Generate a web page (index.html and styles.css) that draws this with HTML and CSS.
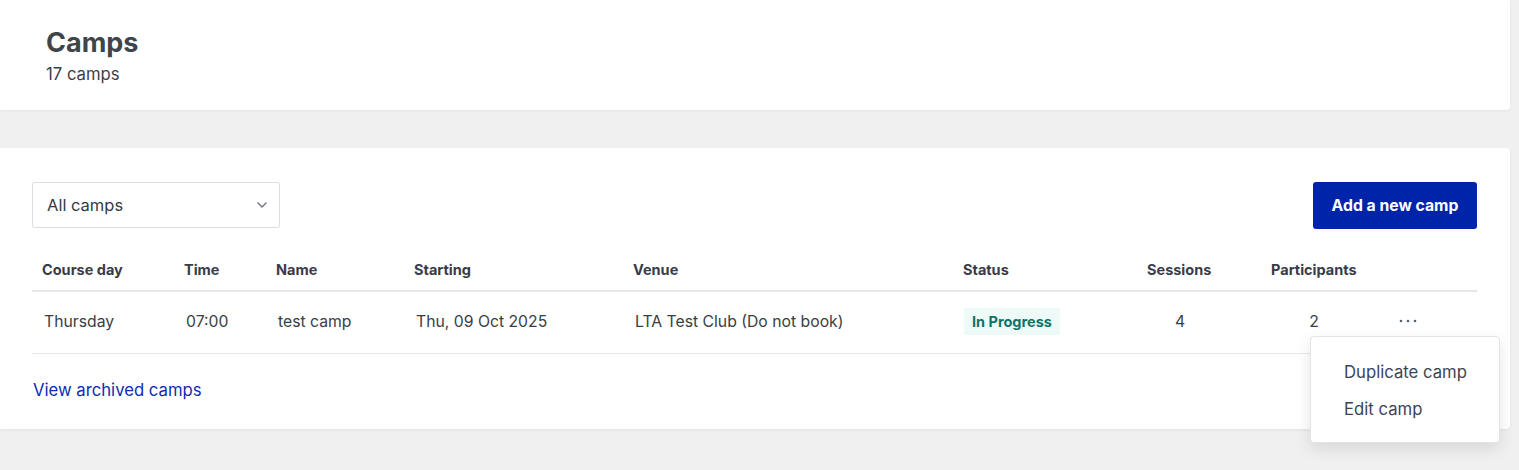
FILE: index.html
```html
<!DOCTYPE html>
<html>
<head>
<meta charset="utf-8">
<link rel="stylesheet" href="styles.css">
</head>
<body>
<div class="page">
  <section class="card header-card">
    <h1 class="title">Camps</h1>
    <div class="subtitle">17 camps</div>
  </section>
  <section class="card list-card">
    <div class="toolbar">
      <div class="select">
        <span>All camps</span>
        <svg class="chev" width="10" height="6" viewBox="0 0 10 6"><path d="M1 1l4 4 4-4" fill="none" stroke="#6b7280" stroke-width="1.4" stroke-linecap="round" stroke-linejoin="round"/></svg>
      </div>
      <button class="btn-primary">Add a new camp</button>
    </div>
    <table class="camps">
      <thead>
        <tr>
          <th class="c-day">Course day</th>
          <th class="c-time">Time</th>
          <th class="c-name">Name</th>
          <th class="c-start">Starting</th>
          <th class="c-venue">Venue</th>
          <th class="c-status">Status</th>
          <th class="c-sess">Sessions</th>
          <th class="c-part">Participants</th>
          <th class="c-act"></th>
        </tr>
      </thead>
      <tbody>
        <tr>
          <td>Thursday</td>
          <td>07:00</td>
          <td>test camp</td>
          <td>Thu, 09 Oct 2025</td>
          <td>LTA Test Club (Do not book)</td>
          <td class="status-cell"><span class="badge">In Progress</span></td>
          <td class="num sess">4</td>
          <td class="num part">2</td>
          <td class="act">
            <div class="menu-wrap">
              <svg width="18" height="4" viewBox="0 0 18 4"><circle cx="2" cy="2" r="1.3" fill="#5b6270"/><circle cx="9" cy="2" r="1.3" fill="#5b6270"/><circle cx="16" cy="2" r="1.3" fill="#5b6270"/></svg>
              <div class="menu">
                <div class="menu-item">Duplicate camp</div>
                <div class="menu-item">Edit camp</div>
              </div>
            </div>
          </td>
        </tr>
      </tbody>
    </table>
    <a class="archived" href="#">View archived camps</a>
  </section>
</div>
</body>
</html>
```

FILE: styles.css
```css
* { box-sizing: border-box; }
html, body { margin: 0; padding: 0; }
body {
  background: #f0f0f0;
  font-family: Inter, "Noto Sans", sans-serif;
  color: #333740;
  width: 1519px;
  height: 470px;
  overflow: hidden;
}
.page {
  width: 1510px;
  display: flex;
  flex-direction: column;
  gap: 38px;
}
.card {
  background: #fff;
  border-radius: 0 0 4px 0;
  box-shadow: 0 1px 3px rgba(0,0,0,0.06);
}
.header-card {
  height: 110px;
  padding: 28px 46px 0;
}
.title {
  margin: 0;
  font-size: 27px;
  font-weight: 700;
  line-height: 30px;
  color: #3f454b;
}
.subtitle {
  margin-top: 5px;
  font-size: 16.7px;
  line-height: 22px;
  color: #3a3f48;
}
.list-card {
  height: 281px;
  border-radius: 0 4px 4px 0;
  padding: 34px 33px 0 32px;
}
.toolbar {
  display: flex;
  justify-content: space-between;
  align-items: flex-start;
}
.select {
  width: 248px;
  height: 46px;
  border: 1px solid #dcdcdc;
  border-radius: 3px;
  display: flex;
  align-items: center;
  justify-content: space-between;
  padding: 0 12px 0 14px;
  font-size: 16.5px;
  color: #333a44;
}
.btn-primary {
  width: 164px;
  height: 47px;
  border: 0;
  border-radius: 3px;
  background: #0024a9;
  color: #fff;
  font-family: Inter, sans-serif;
  font-weight: 700;
  font-size: 15.75px;
}
.camps {
  width: 100%;
  border-collapse: collapse;
  margin-top: 20px;
}
.camps th {
  text-align: left;
  font-size: 14.5px;
  font-weight: 700;
  color: #383b48;
  height: 42px;
  padding: 0 0 0 10px;
  border-bottom: 2px solid #e6e6ec;
  white-space: nowrap;
}
.camps td {
  height: 62px;
  font-size: 15.75px;
  color: #3a3d42;
  padding: 0 0 1px 12px;
  border-bottom: 1px solid #e8e8ec;
  white-space: nowrap;
}
.c-day { width: 142px; }
.c-time { width: 92px; }
.c-name { width: 138px; }
.c-start { width: 219px; }
.c-venue { width: 330px; }
.c-status { width: 184px; }
.c-sess { width: 124px; }
.c-part { width: 118px; }
.camps td.num { text-align: center; padding-left: 0; }
.camps td.sess { padding-right: 38px; }
.camps td.part { padding-right: 12px; }
.camps td.status-cell { padding-left: 11px; }
.badge {
  display: inline-block;
  background: #eefaf7;
  color: #0e7465;
  font-weight: 700;
  font-size: 14.5px;
  padding: 5px 8px;
  border-radius: 3px;
  line-height: 17px;
}
.camps td.act { padding-left: 20px; }
.menu-wrap {
  position: relative;
  display: inline-block;
  height: 4px;
  vertical-align: 4px;
}
.menu-wrap svg { display: block; }
.menu {
  position: absolute;
  left: -89px;
  top: 17px;
  width: 190px;
  height: 107px;
  background: #fff;
  border: 1px solid #e3e3e8;
  border-radius: 4px;
  box-shadow: 0 6px 16px rgba(0,0,0,0.10);
  padding: 17px 0 0 33px;
  z-index: 5;
}
.menu-item {
  font-size: 16.7px;
  line-height: 37px;
  color: #3a4456;
}
.archived {
  display: inline-block;
  margin-top: 26px;
  margin-left: 1px;
  font-size: 16.7px;
  color: #0a2db0;
  text-decoration: none;
}
```
